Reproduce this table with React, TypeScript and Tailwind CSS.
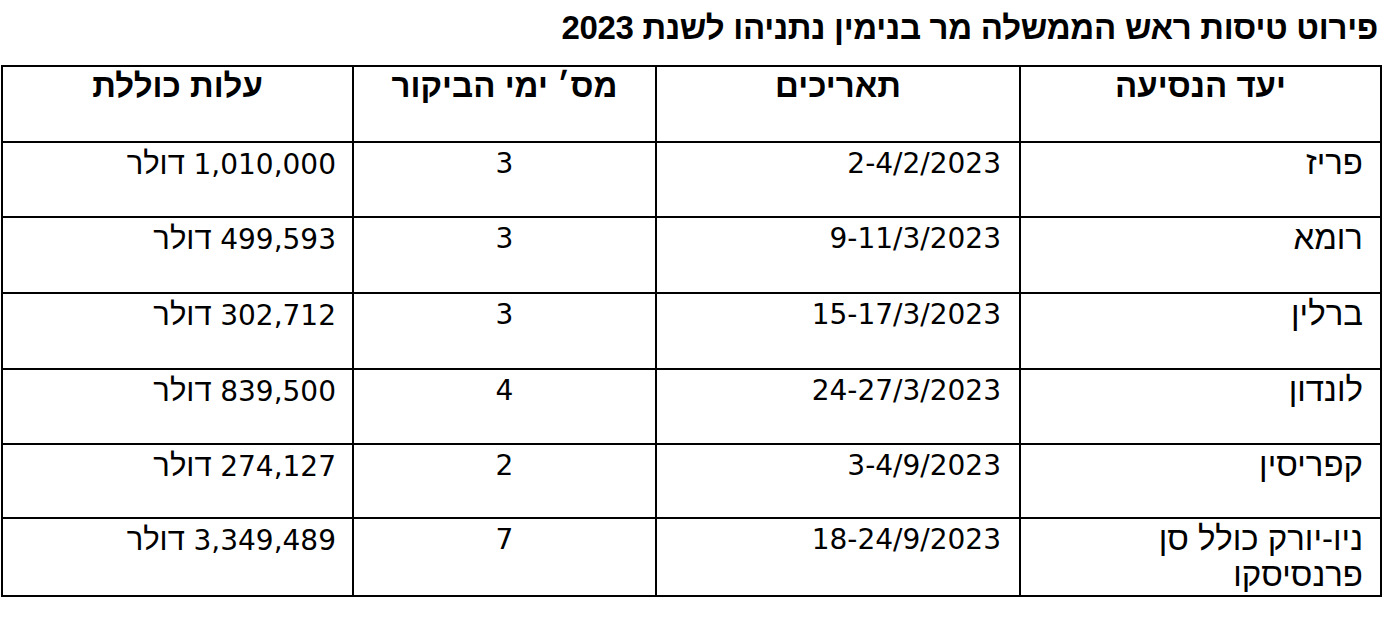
import React from "react";

const rows = [
  { dest: ["פריז"], dates: "2-4/2/2023", days: "3", cost: "1,010,000", h: "h-[75px]" },
  { dest: ["רומא"], dates: "9-11/3/2023", days: "3", cost: "499,593", h: "h-[76px]" },
  { dest: ["ברלין"], dates: "15-17/3/2023", days: "3", cost: "302,712", h: "h-[76px]" },
  { dest: ["לונדון"], dates: "24-27/3/2023", days: "4", cost: "839,500", h: "h-[75px]" },
  { dest: ["קפריסין"], dates: "3-4/9/2023", days: "2", cost: "274,127", h: "h-[74px]" },
  { dest: ["ניו-יורק כולל סן", "פרנסיסקו"], dates: "18-24/9/2023", days: "7", cost: "3,349,489", h: "h-[78px]" },
];

const heb = "font-['Liberation_Sans',sans-serif]";
const num = "font-['DejaVu_Sans',sans-serif]";

export default function App() {
  return (
    <div className="w-[1400px] h-[620px] bg-white text-black" dir="rtl">
      <div className="pt-[8px] pr-[22px]">
        <h1 className={`${heb} font-bold text-[33px] leading-[40px] tracking-[-0.3px]`}>
          פירוט טיסות ראש הממשלה מר בנימין נתניהו לשנת <span className="font-['Liberation_Sans_Narrow','Liberation_Sans',sans-serif]">2023</span>
        </h1>
      </div>
      <div className="pr-[18px] pt-[17px]">
        <table className="border-collapse border-2 border-black w-[1379px] table-fixed">
          <colgroup>
            <col className="w-[361px]" />
            <col className="w-[364px]" />
            <col className="w-[303px]" />
            <col className="w-[351px]" />
          </colgroup>
          <thead>
            <tr className="h-[76px]">
              {["יעד הנסיעה", "תאריכים", "מס׳ ימי הביקור", "עלות כוללת"].map((h) => (
                <th
                  key={h}
                  className={`${heb} border-2 border-black align-top text-center font-bold text-[33px] leading-[34px] pt-[2px]`}
                >
                  {h}
                </th>
              ))}
            </tr>
          </thead>
          <tbody>
            {rows.map((r, i) => (
              <tr key={i} className={r.h}>
                <td className={`${heb} border-2 border-black align-top text-right pr-[17px] pt-[2px] text-[33px] leading-[36px]`}>
                  {r.dest.map((d) => (
                    <div key={d}>{d}</div>
                  ))}
                </td>
                <td className={`${num} border-2 border-black align-top text-right pr-[18px] pt-[3px] text-[28px] leading-[35px]`}>
                  <span dir="ltr">{r.dates}</span>
                </td>
                <td className={`${num} border-2 border-black align-top text-center pt-[3px] text-[28px] leading-[35px]`}>
                  {r.days}
                </td>
                <td className="border-2 border-black align-top text-right pr-[16px] pt-[3px] text-[28px] leading-[35px]">
                  <span className={num} dir="ltr">{r.cost}</span>
                  <span className={`${heb} text-[31px]`}> דולר</span>
                </td>
              </tr>
            ))}
          </tbody>
        </table>
      </div>
    </div>
  );
}
